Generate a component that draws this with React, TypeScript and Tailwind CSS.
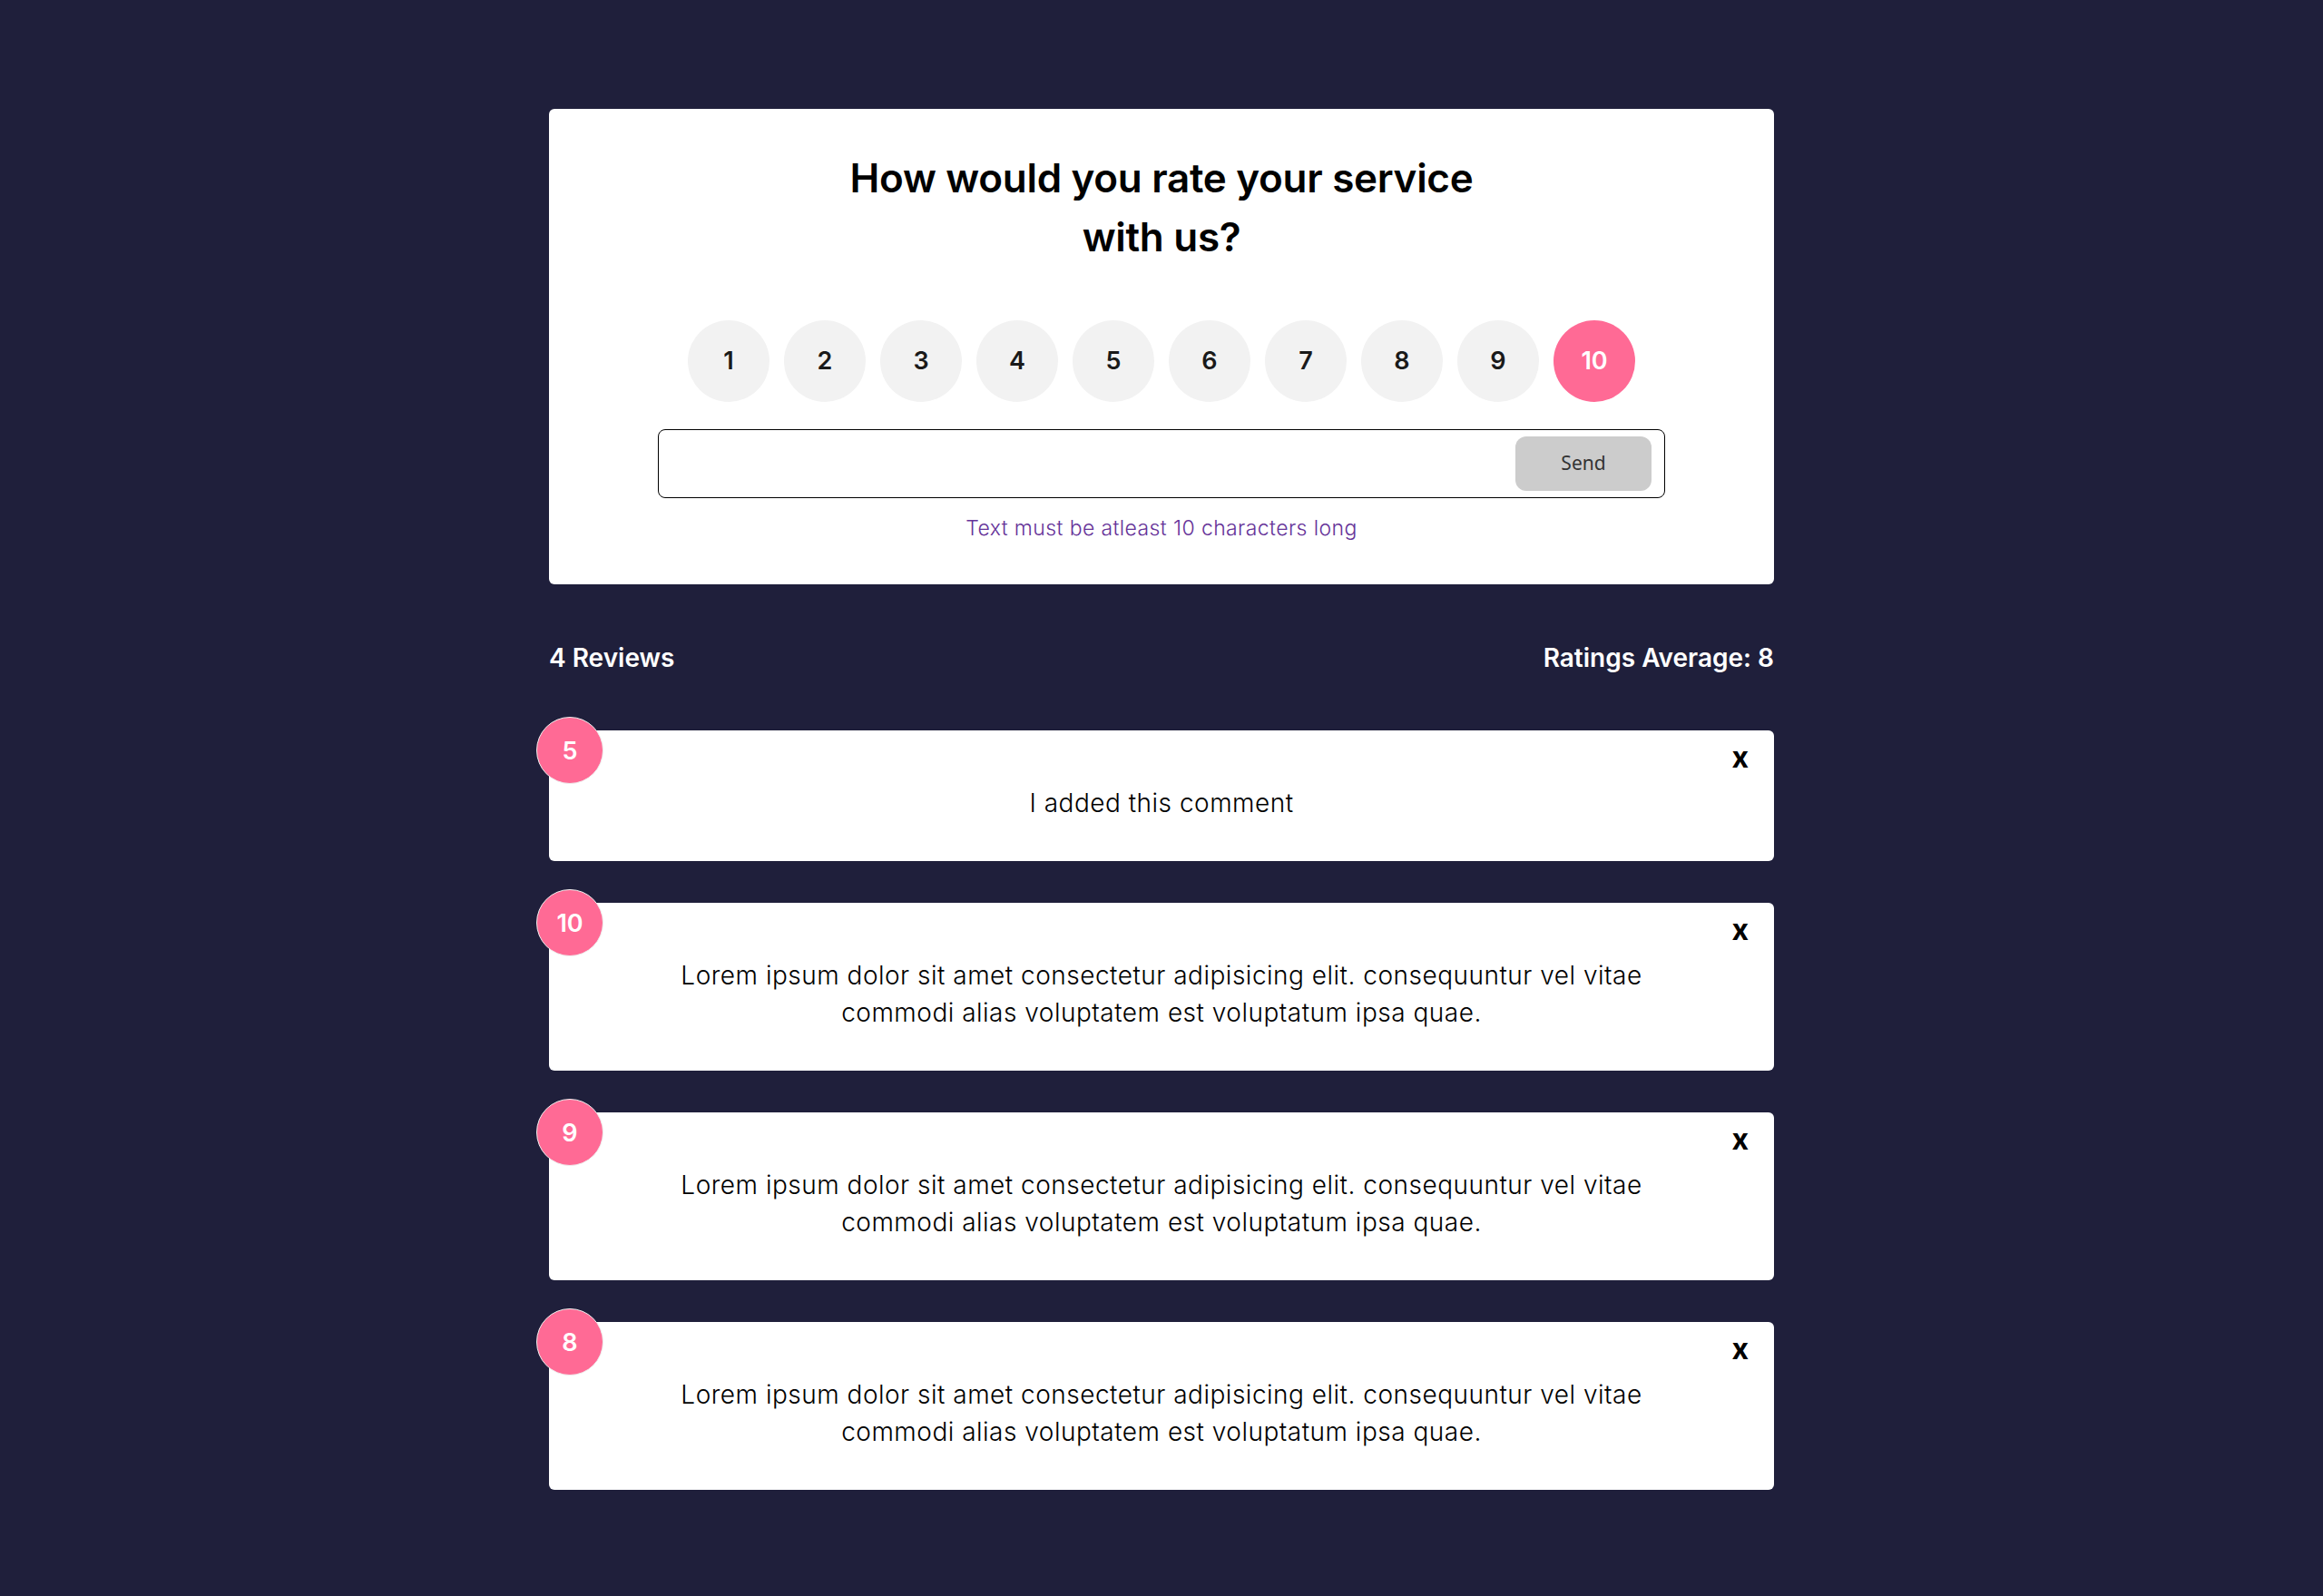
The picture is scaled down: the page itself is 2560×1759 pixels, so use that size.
import React, { useState } from 'react';

interface Review {
  id: number;
  rating: number;
  text: string;
}

const lorem =
  'Lorem ipsum dolor sit amet consectetur adipisicing elit. consequuntur vel vitae commodi alias voluptatem est voluptatum ipsa quae.';

const initialReviews: Review[] = [
  { id: 4, rating: 5, text: 'I added this comment' },
  { id: 1, rating: 10, text: lorem },
  { id: 2, rating: 9, text: lorem },
  { id: 3, rating: 8, text: lorem },
];

export default function App() {
  const [selected, setSelected] = useState(10);
  const [text, setText] = useState('');
  const [reviews, setReviews] = useState<Review[]>(initialReviews);

  const average =
    reviews.length === 0
      ? 0
      : Math.round((reviews.reduce((sum, r) => sum + r.rating, 0) / reviews.length) * 10) / 10;

  return (
    <div className="min-h-screen bg-[#1f1f3b] pt-[120px] pb-[80px] font-['Inter',sans-serif]">
      <div className="mx-auto w-[1350px]">
        {/* Rating form */}
        <div className="rounded-[6px] bg-white pt-[44px] pb-[44px] text-center">
          <h2 className="text-[44px] font-semibold leading-[65px] tracking-[-0.3px] text-black">
            How would you rate your service
            <br />
            with us?
          </h2>

          <ul className="mt-[59px] flex justify-center gap-4">
            {Array.from({ length: 10 }, (_, i) => i + 1).map((n) => (
              <li key={n}>
                <button
                  onClick={() => setSelected(n)}
                  className={`flex h-[90px] w-[90px] items-center justify-center rounded-full text-[27px] font-semibold ${
                    selected === n ? 'bg-[#ff6a95] text-white' : 'bg-[#f2f2f2] text-[#1a1a1a]'
                  }`}
                >
                  {n}
                </button>
              </li>
            ))}
          </ul>

          <div className="mx-auto mt-[30px] flex h-[76px] w-[1110px] items-center rounded-[8px] border border-black pr-[14px] pl-[16px]">
            <input
              value={text}
              onChange={(e) => setText(e.target.value)}
              className="h-full flex-1 bg-transparent text-[24px] outline-none"
            />
            <button
              disabled={text.length < 10}
              className="h-[60px] w-[150px] rounded-[12px] bg-[#cccccc] font-['Noto_Sans',sans-serif] text-[21px] text-[#333]"
            >
              Send
            </button>
          </div>

          <p className="mt-[16px] text-[23px] font-light leading-[35px] tracking-[0.4px] text-[#663399]">
            Text must be atleast 10 characters long
          </p>
        </div>

        {/* Stats */}
        <div className="mt-[59px] mb-[57px] flex items-center justify-between text-[28px] font-semibold leading-[45px] text-white">
          <h4>{reviews.length} Reviews</h4>
          <h4>Ratings Average: {average}</h4>
        </div>

        {/* Review list */}
        <div className="flex flex-col gap-[46px]">
          {reviews.map((r) => (
            <div
              key={r.id}
              className="relative rounded-[6px] bg-white px-[140px] pt-[60px] pb-[43px] text-center text-[28px] font-light leading-[41px] tracking-[0.5px] text-black"
            >
              <div className="absolute -top-[15px] -left-[14px] flex h-[74px] w-[74px] items-center justify-center rounded-full border border-[#eee] bg-[#ff6a95] text-[27px] font-semibold tracking-normal text-white">
                {r.rating}
              </div>
              <button
                onClick={() => setReviews(reviews.filter((x) => x.id !== r.id))}
                className="absolute top-[10px] right-[28px] text-[32px] leading-[40px] font-bold tracking-normal text-black"
              >
                x
              </button>
              <p>{r.text}</p>
            </div>
          ))}
        </div>
      </div>
    </div>
  );
}
